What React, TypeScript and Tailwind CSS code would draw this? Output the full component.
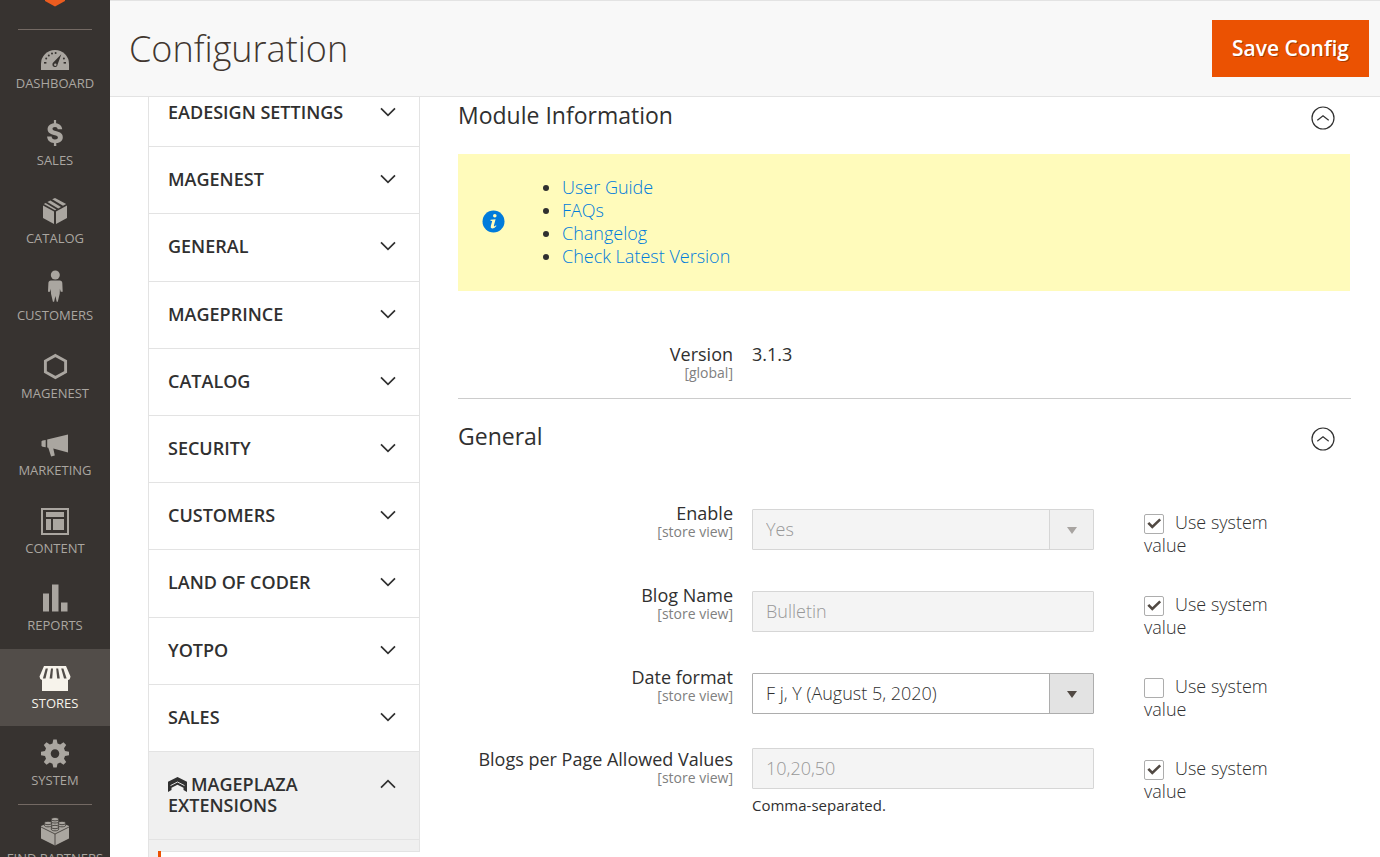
import React from "react";

type IconName =
  | "dashboard"
  | "sales"
  | "catalog"
  | "customers"
  | "magenest"
  | "marketing"
  | "content"
  | "reports"
  | "stores"
  | "system"
  | "partners";

const glyphs: Record<IconName, React.ReactNode> = {
  dashboard: (
    <>
      <path d="M2 30V24A14 14 0 0 1 30 24V30Z" fill="currentColor" />
      <g className="fill-[#373330]">
        <rect x="5" y="22" width="2.4" height="1.6" />
        <rect x="24.6" y="22" width="2.4" height="1.6" />
        <circle cx="7.2" cy="18.4" r="1" />
        <circle cx="9.8" cy="15.4" r="1" />
        <circle cx="13" cy="13.6" r="1" />
        <circle cx="16.6" cy="13" r="1" />
        <circle cx="24.9" cy="18.4" r="1" />
        <path d="M22.3 14.3 18.6 24.6A2.6 2.6 0 1 1 14.2 22.6Z" />
      </g>
      <circle cx="16.3" cy="24.8" r="1.2" fill="currentColor" />
    </>
  ),
  sales: (
    <path
      d="M14.9 3h2.200v3.300c3.400.4 5.900 2.700 6.100 5.900h-4.500c-.2-1.500-1.100-2.200-2.700-2.200-1.600 0-2.500.7-2.500 1.800 0 1.300 1 1.800 4 2.500 4.400 1 6.300 2.700 6.300 5.900 0 3.300-2.400 5.500-6.500 5.900v2.900h-2.400v-2.900c-4.100-.4-6.600-2.800-6.800-6.600h4.500c.2 1.900 1.200 2.900 3.400 2.900 1.800 0 2.900-.7 2.900-1.900 0-1.400-.9-1.900-4-2.600-4.400-1-6.300-2.600-6.300-5.800 0-3.100 2.400-5.400 6.300-5.800z"
      fill="currentColor"
    />
  ),
  catalog: (
    <g fill="currentColor">
      <path d="M4 10.600 15 16.600V29L4 23Z" />
      <path d="M28 10.600 17 16.600V29L28 23Z" />
      <path d="M13.200 4.300 16 2.900 27.200 9 24 10.800Z" />
      <path d="M11.400 5.400 22 11.900 19.200 13.400 8.400 7Z" />
      <path d="M6.600 8 17.400 14.400 16 15.200 4.800 9Z" />
    </g>
  ),
  customers: (
    <g fill="currentColor">
      <circle cx="16.300" cy="3" r="4.500" />
      <path d="M12 8.500h8.700q2.500 0 2.600 2.600l.4 8.600h-2l-.8-3-.2 5-1.900 8h-1.100l-1.300-5.600-1.300 5.600h-1.200l-1.900-8-.2-5-.8 3H9l.4-8.600q.1-2.600 2.600-2.600z" />
    </g>
  ),
  magenest: (
    <path d="M16.400 5.400 26.600 11V22L16.400 27.600 6.400 22V11Z" fill="none" stroke="currentColor" strokeWidth="2.900" />
  ),
  marketing: (
    <g fill="currentColor">
      <path d="M3.600 13.500 6.700 12.900V20.300L3.600 19.800 2.500 19V14.300Z" />
      <path d="M8.200 12.500 29 7.500V25.400L14.300 21.600 15.800 28.600 12.100 29.500 9.300 20.800 8.200 20.500Z" />
    </g>
  ),
  content: (
    <>
      <rect x="3" y="4" width="26" height="25" fill="none" stroke="currentColor" strokeWidth="2" />
      <g fill="currentColor">
        <rect x="7" y="7" width="18" height="5" />
        <rect x="7" y="14" width="5" height="11" />
        <rect x="14" y="14" width="11" height="11" />
      </g>
    </>
  ),
  reports: (
    <g fill="currentColor">
      <rect x="4" y="11.500" width="6" height="18" />
      <rect x="13" y="2.500" width="6.500" height="27" />
      <rect x="22" y="20.500" width="6.500" height="9" />
    </g>
  ),
  stores: (
    <>
      <path d="M5 6H27L31.500 16.500Q31 20 29 20V31H3V20Q.8 19.600.5 16.500Z" fill="currentColor" />
      <g className="fill-[#524d49]">
        <path d="M6.700 8.500H8.900L6.500 18.500H3.900Z" />
        <path d="M12 8.500H14L13.200 18.500H10.600Z" />
        <path d="M17.200 8.500H19.200L20.800 18.500H18.200Z" />
        <path d="M22.200 8.500H24.400L27.600 18.500H25Z" />
      </g>
    </>
  ),
  system: (
    <path
      fillRule="evenodd"
      fill="currentColor"
      d="M14.300 2.500h3.400l.8 3.900 2.700 1.100 3.300-2.200 2.700 2.700-2.200 3.300 1 2.600 4 .9v3.500l-4 .8-1 2.700 2.200 3.300-2.700 2.600-3.300-2.200-2.700 1.200-.8 3.800h-3.400l-.8-3.800-2.700-1.200-3.300 2.200-2.700-2.600L7 21.800l-1-2.700-4-.8v-3.500l4-.9 1-2.600L4.800 8l2.700-2.700 3.300 2.200 2.700-1.100zM16 12.300a4.300 4.300 0 1 0 0 8.600 4.300 4.300 0 0 0 0-8.600z"
    />
  ),
  partners: (
    <>
      <path d="M2 11 16 5 30 11V23.500L16 30.500 2 23.500Z" fill="currentColor" />
      <path d="M2 12 16 19 30 12M16 19V30.500" fill="none" className="stroke-[#373330]" strokeWidth=".8" />
      <g fill="currentColor" className="stroke-[#373330]" strokeWidth=".8">
        <path d="M12.300 4.200v2.200c0 2.200 7.400 2.200 7.400 0V4.200z" />
        <ellipse cx="16" cy="4.200" rx="3.700" ry="1.700" />
        <path d="M5.300 8v2.200c0 2.200 7.400 2.200 7.400 0V8z" />
        <ellipse cx="9" cy="8" rx="3.700" ry="1.700" />
        <path d="M19.300 8v2.200c0 2.200 7.400 2.200 7.400 0V8z" />
        <ellipse cx="23" cy="8" rx="3.700" ry="1.700" />
        <path d="M12.300 12v2.200c0 2.200 7.400 2.200 7.400 0V12z" />
        <ellipse cx="16" cy="12" rx="3.700" ry="1.700" />
      </g>
    </>
  ),
};

const menu: { icon: IconName; label: string }[] = [
  { icon: "dashboard", label: "Dashboard" },
  { icon: "sales", label: "Sales" },
  { icon: "catalog", label: "Catalog" },
  { icon: "customers", label: "Customers" },
  { icon: "magenest", label: "Magenest" },
  { icon: "marketing", label: "Marketing" },
  { icon: "content", label: "Content" },
  { icon: "reports", label: "Reports" },
  { icon: "stores", label: "Stores" },
  { icon: "system", label: "System" },
];

const tabs = [
  "Eadesign Settings",
  "Magenest",
  "General",
  "Mageprince",
  "Catalog",
  "Security",
  "Customers",
  "Land of Coder",
  "Yotpo",
  "Sales",
];

function MenuLink({ icon, label, active = false }: { icon: IconName; label: string; active?: boolean }) {
  return (
    <a
      href="#"
      className={
        "flex h-full flex-col items-center gap-px px-1 pt-[9px] text-center text-[13px] leading-4 uppercase " +
        (active ? "bg-[#524d49] font-medium text-[#f7f3eb]" : "text-[#aaa6a0]")
      }
    >
      <svg viewBox="0 -2 32 36" className="h-9 w-8 shrink-0" aria-hidden="true">
        {glyphs[icon]}
      </svg>
      {label}
    </a>
  );
}

function Chevron({ up = false }: { up?: boolean }) {
  return (
    <svg viewBox="0 0 16 10" className="mt-[5px] h-2.5 w-4 shrink-0" fill="none" stroke="#303030" strokeWidth="1.700" aria-hidden="true">
      <path d={up ? "M1 8.700 8 1.700 15 8.700" : "M1 1.300 8 8.300 15 1.300"} />
    </svg>
  );
}

function SectionHead({ title }: { title: string }) {
  return (
    <div className="flex items-start justify-between pr-4">
      <h2 className="text-[23px] leading-[26px] font-medium">{title}</h2>
      <button type="button" aria-label={"Collapse " + title} className="mt-1">
        <svg viewBox="0 0 24 24" className="size-6" fill="none" stroke="#303030" strokeWidth="1.200" aria-hidden="true">
          <circle cx="12" cy="12" r="11" />
          <path d="M6.300 14.300 12 9.800 17.700 14.300" />
        </svg>
      </button>
    </div>
  );
}

function Caption({ htmlFor, title, scope }: { htmlFor: string; title: string; scope: string }) {
  return (
    <label htmlFor={htmlFor} className="block text-right">
      <span className="block text-[18px] leading-5 font-medium">{title}</span>
      <span className="mt-px block text-[14px] leading-4 text-[#808080]">{scope}</span>
    </label>
  );
}

function SystemValue({ id, checked }: { id: string; checked: boolean }) {
  return (
    <div className="pl-[50px]">
      <label htmlFor={id} className="block w-36 text-[18px] leading-[23px] font-[350]">
        <span className="relative mr-[11px] inline-block size-5 align-[-5px]">
          <input
            id={id}
            type="checkbox"
            defaultChecked={checked}
            className="peer block size-5 appearance-none rounded-[2px] border border-[#adadad] bg-white"
          />
          <svg
            viewBox="0 0 20 20"
            className="pointer-events-none absolute inset-0 hidden size-5 peer-checked:block"
            fill="none"
            stroke="#514943"
            strokeWidth="2.600"
            aria-hidden="true"
          >
            <path d="M4.300 8.800 8.300 12.900 16.200 5.400" />
          </svg>
        </span>
        Use system value
      </label>
    </div>
  );
}

function SelectBox({ id, value, disabled = false }: { id: string; value: string; disabled?: boolean }) {
  return (
    <div className="relative">
      <select
        id={id}
        disabled={disabled}
        defaultValue={value}
        className="block h-[41px] w-full appearance-none rounded-[1px] border border-[#adadad] bg-white pr-12 pl-[13px] text-[18px] font-[350] text-[#303030] disabled:border-[#d6d6d6] disabled:bg-[#f4f4f4] disabled:text-[#989898] disabled:opacity-100"
      >
        <option>{value}</option>
      </select>
      <span
        className={
          "pointer-events-none absolute inset-y-px right-px flex w-11 items-center justify-center border-l " +
          (disabled ? "border-[#d6d6d6] bg-[#f0f0f0] text-[#a8a4a1]" : "border-[#adadad] bg-[#e3e3e3] text-[#514943]")
        }
      >
        <svg viewBox="0 0 10 7" className="mt-0.5 h-[7px] w-2.5" fill="currentColor" aria-hidden="true">
          <path d="M0 0H10L5 7Z" />
        </svg>
      </span>
    </div>
  );
}

function TextBox({ id, value }: { id: string; value: string }) {
  return (
    <input
      id={id}
      type="text"
      disabled
      defaultValue={value}
      className="block h-[41px] w-full rounded-[1px] border border-[#d6d6d6] bg-[#f4f4f4] px-[13px] pb-0.5 text-[18px] font-[350] text-[#989898]"
    />
  );
}

function Field({
  id,
  title,
  checked,
  raised = false,
  children,
}: {
  id: string;
  title: string;
  checked: boolean;
  raised?: boolean;
  children: React.ReactNode;
}) {
  return (
    <div className="grid h-[82px] grid-cols-[275fr_361fr_257fr]">
      <div className="pt-px">
        <Caption htmlFor={id} title={title} scope="[store view]" />
      </div>
      <div className={raised ? "pt-0 pl-[19px]" : "pt-[7px] pl-[19px]"}>{children}</div>
      <div className="pt-[9px]">
        <SystemValue id={id + "-inherit"} checked={checked} />
      </div>
    </div>
  );
}

export default function App() {
  return (
    <div className="flex h-screen overflow-hidden bg-white font-['Open_Sans',sans-serif] text-[#303030]">
      <aside className="w-[110px] shrink-0 overflow-hidden bg-[#373330]">
        <div className="flex h-[29px] justify-center">
          <svg viewBox="0 0 20 7" className="h-[7px] w-5" role="img" aria-label="Magento">
            <path d="M0 0H20V1L10 6.500 0 1Z" fill="#eb5c1f" />
          </svg>
        </div>
        <nav aria-label="Main menu">
          <div className="relative">
            <span className="absolute top-0 left-[18px] h-px w-[74px] bg-[#736963]" />
            <ul>
              {menu.map((m) => (
                <li key={m.label} className="odd:h-[77px] even:h-[78px]">
                  <MenuLink icon={m.icon} label={m.label} active={m.icon === "stores"} />
                </li>
              ))}
            </ul>
          </div>
          <div className="relative">
            <span className="absolute top-0 left-[18px] h-px w-[74px] bg-[#736963]" />
            <MenuLink icon="partners" label="Find Partners & Extensions" />
          </div>
        </nav>
      </aside>

      <div className="flex min-w-0 flex-1 flex-col">
        <header className="z-10 flex h-[97px] shrink-0 items-center justify-between border-y border-[#e3e3e3] bg-[#f8f8f8] pr-[11px] pl-[19px]">
          <h1 className="text-[36px] leading-[48px] font-[350] text-[#41362f]">Configuration</h1>
          <button
            type="button"
            className="h-[57px] bg-[#eb5202] px-5 text-[21px] font-semibold text-white [text-shadow:1px_1px_0_rgba(0,0,0,0.3)]"
          >
            Save Config
          </button>
        </header>

        <div className="flex min-h-0 flex-1 items-start overflow-hidden pr-[29px] pl-[38px]">
          <nav aria-label="Configuration sections" className="-mt-[18px] w-[272px] shrink-0 text-[18px] leading-[21px] font-semibold uppercase">
            <ul className="grid h-[672px] grid-rows-10 border-x border-[#e3e3e3]">
              {tabs.map((t) => (
                <li key={t} className="border-t border-[#e3e3e3]">
                  <button type="button" className="flex w-full items-start justify-between pt-[22px] pr-[23px] pl-[19px] text-left uppercase">
                    {t}
                    <Chevron />
                  </button>
                </li>
              ))}
            </ul>
            <div className="border-x border-t border-[#e3e3e3] bg-[#f0f0f0]">
              <button type="button" className="flex h-[87px] w-full items-start justify-between pt-[22px] pr-[23px] pl-[19px] text-left uppercase">
                <span>
                  <svg viewBox="0 0 19 15" className="mr-1 inline h-[15px] w-[19px] align-[-1px]" aria-hidden="true">
                    <path d="M0 4.800 9.500 0 19 4.800V15L15.500 13V10.800L9.500 7.800 3.500 10.800V13L0 15Z" fill="currentColor" />
                    <path d="M2.500 8.600 9.500 5 16.500 8.600" fill="none" stroke="#f0f0f0" strokeWidth=".9" />
                  </svg>
                  Mageplaza Extensions
                </span>
                <Chevron up />
              </button>
            </div>
            <div className="border-t border-l border-[#e3e3e3] bg-[#f0f0f0] pl-[9px]">
              <div className="h-[11px] border-r border-[#e3e3e3]" />
              <div className="flex h-12">
                <div className="w-[3px] bg-[#eb5202]" />
                <div className="flex-1 border-t border-[#e3e3e3] bg-white" />
              </div>
            </div>
          </nav>

          <main className="min-w-0 flex-1 pl-[38px]">
            <section>
              <div className="pt-[5px]">
                <SectionHead title="Module Information" />
              </div>
              <div className="mt-[24px] mr-px flex h-[137px] items-center bg-[#fffbbb] pb-0.5 pl-6">
                <svg viewBox="0 0 24 24" className="size-6" aria-hidden="true">
                  <circle cx="11.500" cy="11.500" r="11" fill="#007bdb" />
                  <circle cx="12.800" cy="5.800" r="1.800" fill="#fffbbb" />
                  <path d="M8.600 9.700 13.600 9.200 11.900 15.600Q11.700 16.700 12.700 16.200L14 15.300 14.400 16Q12.200 18.600 10.100 18.500 8.200 18.200 8.800 16L10.200 11 8.400 10.800Z" fill="#fffbbb" />
                </svg>
                <ul className="list-disc pl-14 text-[18px] leading-[23px] font-[350]">
                  {["User Guide", "FAQs", "Changelog", "Check Latest Version"].map((t) => (
                    <li key={t}>
                      <a href="#" className="text-[#007bdb]">
                        {t}
                      </a>
                    </li>
                  ))}
                </ul>
              </div>
              <div className="mt-[53px] grid h-[54px] grid-cols-[275fr_618fr]">
                <div className="text-right">
                  <div className="text-[18px] leading-5 font-medium">Version</div>
                  <div className="mt-px text-[14px] leading-4 text-[#808080]">[global]</div>
                </div>
                <div className="pl-[19px] text-[18px] leading-5 font-medium">3.1.3</div>
              </div>
            </section>

            <section className="border-t border-[#cccccc] pt-[24px]">
              <SectionHead title="General" />
              <div className="mt-[51px]">
                <Field id="enable" title="Enable" checked>
                  <SelectBox id="enable" value="Yes" disabled />
                </Field>
                <Field id="name" title="Blog Name" checked>
                  <TextBox id="name" value="Bulletin" />
                </Field>
                <Field id="date" title="Date format" checked={false}>
                  <SelectBox id="date" value="F j, Y (August 5, 2020)" />
                </Field>
                <Field id="per-page" title="Blogs per Page Allowed Values" checked raised>
                  <TextBox id="per-page" value="10,20,50" />
                  <p className="mt-[6px] text-[15px] leading-5">Comma-separated.</p>
                </Field>
              </div>
            </section>
          </main>
        </div>
      </div>
    </div>
  );
}
